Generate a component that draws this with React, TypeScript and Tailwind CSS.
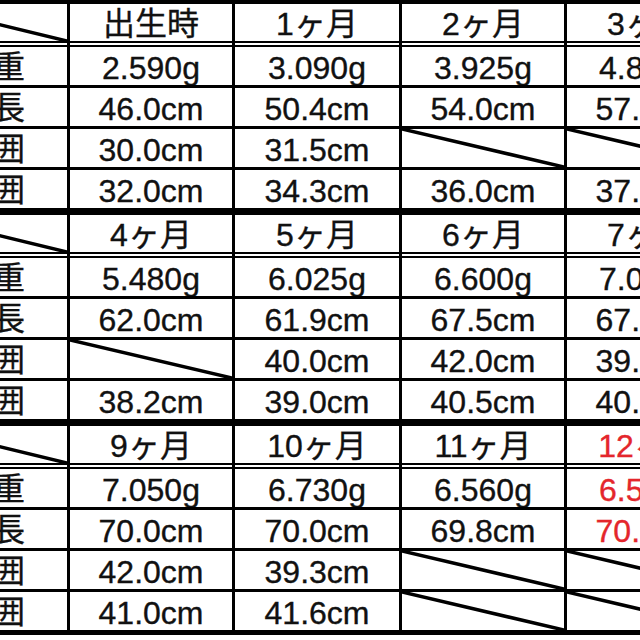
import React from "react";

type Cell = string | null; // null => empty cell crossed by a diagonal

interface Block {
  headers: string[];
  redCol: number;
  rows: { label: string; cells: Cell[] }[];
}

const blocks: Block[] = [
  {
    headers: ["出生時", "1ヶ月", "2ヶ月", "3ヶ月"],
    redCol: -1,
    rows: [
      { label: "体重", cells: ["2.590g", "3.090g", "3.925g", "4.830g"] },
      { label: "身長", cells: ["46.0cm", "50.4cm", "54.0cm", "57.0cm"] },
      { label: "頭囲", cells: ["30.0cm", "31.5cm", null, null] },
      { label: "胸囲", cells: ["32.0cm", "34.3cm", "36.0cm", "37.0cm"] },
    ],
  },
  {
    headers: ["4ヶ月", "5ヶ月", "6ヶ月", "7ヶ月"],
    redCol: -1,
    rows: [
      { label: "体重", cells: ["5.480g", "6.025g", "6.600g", "7.000g"] },
      { label: "身長", cells: ["62.0cm", "61.9cm", "67.5cm", "67.5cm"] },
      { label: "頭囲", cells: [null, "40.0cm", "42.0cm", "39.5cm"] },
      { label: "胸囲", cells: ["38.2cm", "39.0cm", "40.5cm", "40.5cm"] },
    ],
  },
  {
    headers: ["9ヶ月", "10ヶ月", "11ヶ月", "12ヶ月"],
    redCol: 3,
    rows: [
      { label: "体重", cells: ["7.050g", "6.730g", "6.560g", "6.580g"] },
      { label: "身長", cells: ["70.0cm", "70.0cm", "69.8cm", "70.5cm"] },
      { label: "頭囲", cells: ["42.0cm", "39.3cm", null, null] },
      { label: "胸囲", cells: ["41.0cm", "41.6cm", null, null] },
    ],
  },
];

const GRID = "grid grid-cols-[152px_162px_164px_162px_162px] gap-x-[3px]";
const FONT = { fontFamily: '"Liberation Sans", "Noto Sans CJK JP", sans-serif' };

function Diagonal() {
  return (
    <svg
      className="absolute inset-0 w-full h-full"
      viewBox="0 0 100 100"
      preserveAspectRatio="none"
    >
      <line
        x1="0"
        y1="0"
        x2="100"
        y2="100"
        stroke="#000"
        strokeWidth="3.5"
        vectorEffect="non-scaling-stroke"
      />
    </svg>
  );
}

function TextCell({ value, red }: { value: Cell; red?: boolean }) {
  return (
    <div className="relative bg-white flex items-center justify-center overflow-hidden">
      {value === null ? (
        <Diagonal />
      ) : (
        <span
          className={`text-[32px] leading-none whitespace-nowrap pt-[3px] [-webkit-text-stroke:0.35px_currentColor] ${
            red ? "text-[#e4262c]" : "text-[#111111]"
          }`}
        >
          {value}
        </span>
      )}
    </div>
  );
}

function BlockView({ block }: { block: Block }) {
  return (
    <>
      <div className={`${GRID} h-[37px]`}>
        <div className="relative bg-white">
          <Diagonal />
        </div>
        {block.headers.map((h, i) => (
          <TextCell key={h} value={h} red={i === block.redCol} />
        ))}
      </div>
      <div className="h-[2px]" />
      <div className={`${GRID} h-[2px]`}>
        {[0, 1, 2, 3, 4].map((i) => (
          <div key={i} className="bg-white" />
        ))}
      </div>
      <div className="h-[2px]" />
      {block.rows.map((r, ri) => (
        <React.Fragment key={r.label}>
          {ri > 0 && <div className="h-[3px]" />}
          <div className={`${GRID} h-[38px]`}>
            <div className="bg-white flex items-center justify-center overflow-hidden">
              <span className="text-[32px] leading-none text-[#111111] pt-[2px] pl-[4px] [-webkit-text-stroke:0.35px_currentColor]">
                {r.label}
              </span>
            </div>
            {r.cells.map((c, ci) => (
              <TextCell key={ci} value={c} red={ci === block.redCol} />
            ))}
          </div>
        </React.Fragment>
      ))}
    </>
  );
}

export default function App() {
  return (
    <div className="w-[640px] h-[640px] overflow-hidden bg-white" style={FONT}>
      <div className="-ml-[85px] w-[730px] bg-black flex flex-col">
        <div className="h-[4px]" />
        <BlockView block={blocks[0]} />
        <div className="h-[7px]" />
        <BlockView block={blocks[1]} />
        <div className="h-[7px]" />
        <BlockView block={blocks[2]} />
        <div className="h-[5px]" />
      </div>
    </div>
  );
}
